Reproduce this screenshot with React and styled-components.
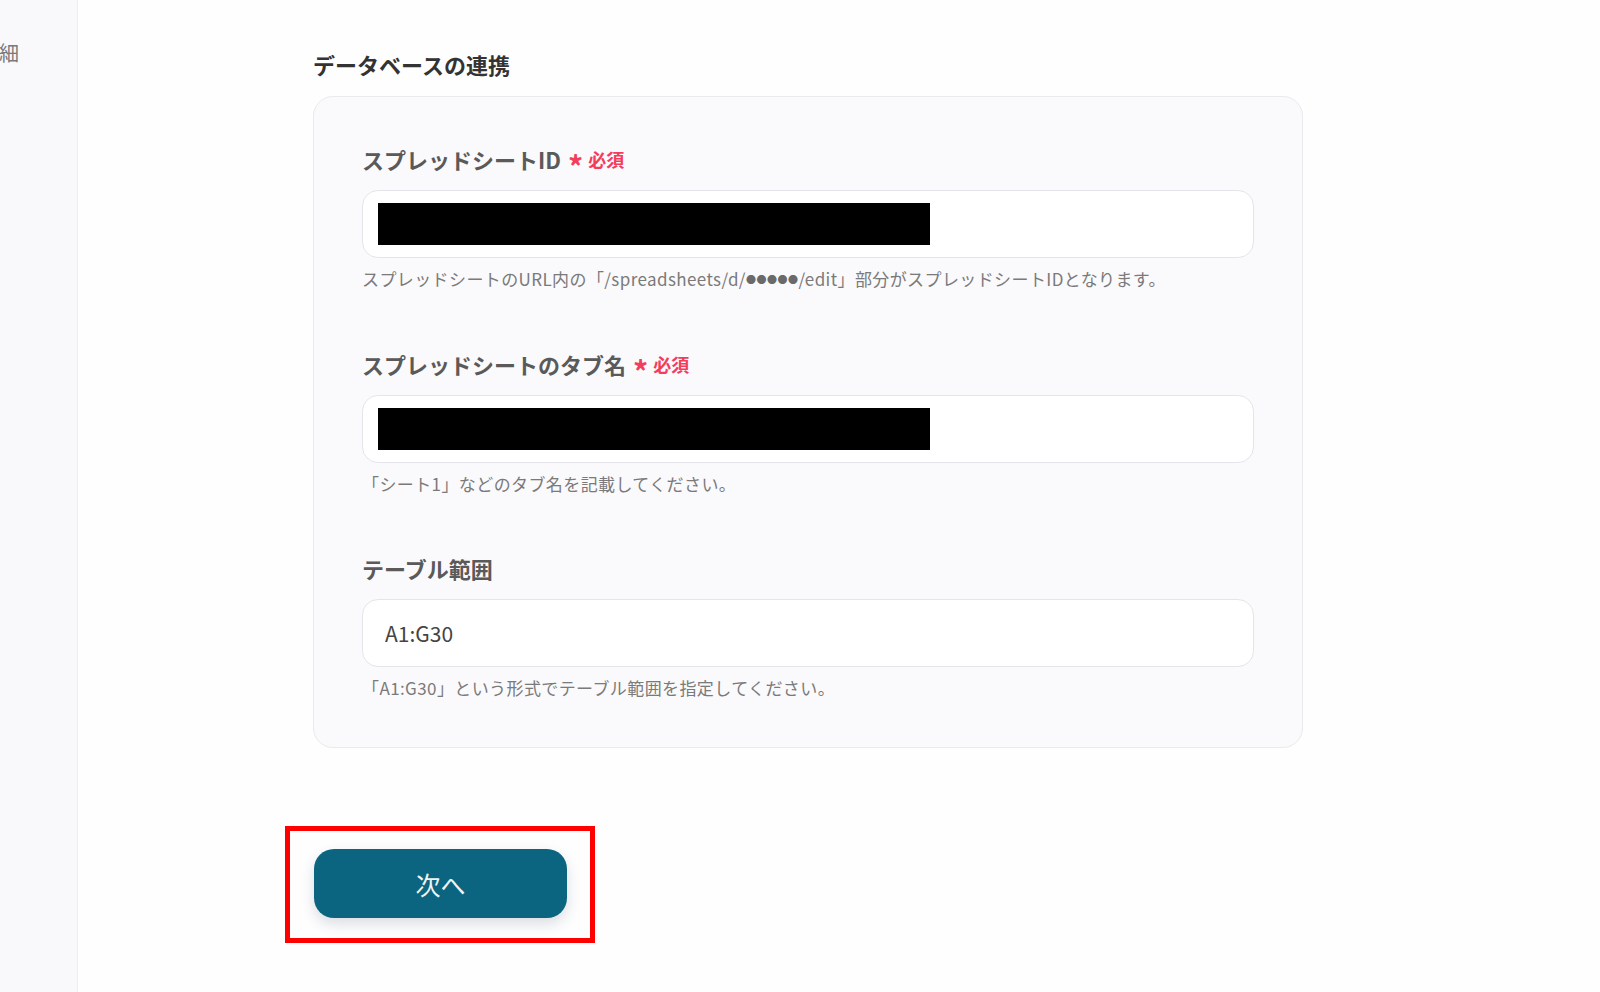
import React from "react";
import styled, { createGlobalStyle } from "styled-components";

const GlobalStyle = createGlobalStyle`
  html, body { margin: 0; padding: 0; background: #fefeff; }
  body { font-family: "Noto Sans CJK JP", "Noto Sans", sans-serif; }
  * { box-sizing: border-box; }
`;

const Page = styled.div`
  display: flex;
  width: 1600px;
  height: 992px;
  overflow: hidden;
  background: #fefeff;
`;

const Sidebar = styled.aside`
  width: 78px;
  flex-shrink: 0;
  background: #f9f8fb;
  border-right: 1px solid #efedf2;
  padding-top: 38px;
  overflow: hidden;
`;

const SideItem = styled.div`
  font-size: 20px;
  line-height: 30px;
  color: #7a7a7a;
  margin-left: -1px;
  white-space: nowrap;
`;

const Main = styled.main`
  flex: 1;
  padding: 49px 0 0 235px;
  display: flex;
  flex-direction: column;
  align-items: flex-start;
`;

const Title = styled.h2`
  margin: 0 0 17px 0;
  font-size: 22px;
  line-height: 30px;
  font-weight: 700;
  color: #333333;
`;

const Card = styled.section`
  width: 990px;
  background: #faf9fb;
  border: 1px solid #ebe9ee;
  border-radius: 20px;
  padding: 49px 48px 47px 48px;
  display: flex;
  flex-direction: column;
  gap: 59px;
`;

const Field = styled.div`
  display: flex;
  flex-direction: column;
`;

const Label = styled.div`
  display: flex;
  align-items: center;
  height: 27px;
  font-size: 22px;
  line-height: 27px;
  font-weight: 700;
  color: #5a5a5a;
  margin-bottom: 17px;
`;

const Required = styled.span`
  display: inline-flex;
  align-items: center;
  height: 27px;
  margin-left: 7px;
  color: #f23d5c;
  font-size: 18px;
  font-weight: 700;
`;

const Asterisk = styled.span`
  font-size: 30px;
  line-height: 27px;
  height: 27px;
  margin-right: 5px;
  position: relative;
  top: 6px;
`;

const InputBox = styled.div`
  height: 68px;
  background: #ffffff;
  border: 1px solid #e6e4ea;
  border-radius: 16px;
  display: flex;
  align-items: center;
  padding-left: ${(p) => (p.$redacted ? "15px" : "22px")};
  font-size: 21px;
  color: #444444;
`;

const Redaction = styled.div`
  width: 552px;
  height: 42px;
  background: #000000;
`;

const Help = styled.div`
  margin-top: 9px;
  font-size: 17px;
  letter-spacing: 0.4px;
  line-height: 24px;
  color: #7a7a7a;
  white-space: nowrap;
`;

const Dots = styled.span`
  font-size: 10px;
  letter-spacing: 0.5px;
  vertical-align: 2px;
  color: #6a6a6a;
`;

const Annotation = styled.div`
  margin: 78px 0 0 -28px;
  border: 5px solid #ff0000;
  padding: 18px 23px 20px 24px;
  display: inline-flex;
`;

const NextButton = styled.button`
  width: 253px;
  height: 69px;
  border: none;
  border-radius: 20px;
  background: #0b6580;
  color: #eef4f6;
  font-family: "Noto Sans CJK JP", "Noto Sans", sans-serif;
  font-size: 25px;
  font-weight: 400;
  box-shadow: 0 6px 14px rgba(40, 50, 70, 0.16);
  cursor: pointer;
`;

function FormField({ label, required, children, help }) {
  return (
    <Field>
      <Label>
        {label}
        {required && (
          <Required>
            <Asterisk>*</Asterisk>必須
          </Required>
        )}
      </Label>
      {children}
      <Help>{help}</Help>
    </Field>
  );
}

export default function App() {
  return (
    <>
      <GlobalStyle />
      <Page>
        <Sidebar>
          <SideItem>細</SideItem>
        </Sidebar>
        <Main>
          <Title>データベースの連携</Title>
          <Card>
            <FormField
              label="スプレッドシートID"
              required
              help={
                <>
                  スプレッドシートのURL内の「/spreadsheets/d/<Dots>●●●●●</Dots>/edit」部分がスプレッドシートIDとなります。
                </>
              }
            >
              <InputBox $redacted>
                <Redaction />
              </InputBox>
            </FormField>
            <FormField
              label="スプレッドシートのタブ名"
              required
              help="「シート1」などのタブ名を記載してください。"
            >
              <InputBox $redacted>
                <Redaction />
              </InputBox>
            </FormField>
            <FormField
              label="テーブル範囲"
              help="「A1:G30」という形式でテーブル範囲を指定してください。"
            >
              <InputBox>A1:G30</InputBox>
            </FormField>
          </Card>
          <Annotation>
            <NextButton>次へ</NextButton>
          </Annotation>
        </Main>
      </Page>
    </>
  );
}
